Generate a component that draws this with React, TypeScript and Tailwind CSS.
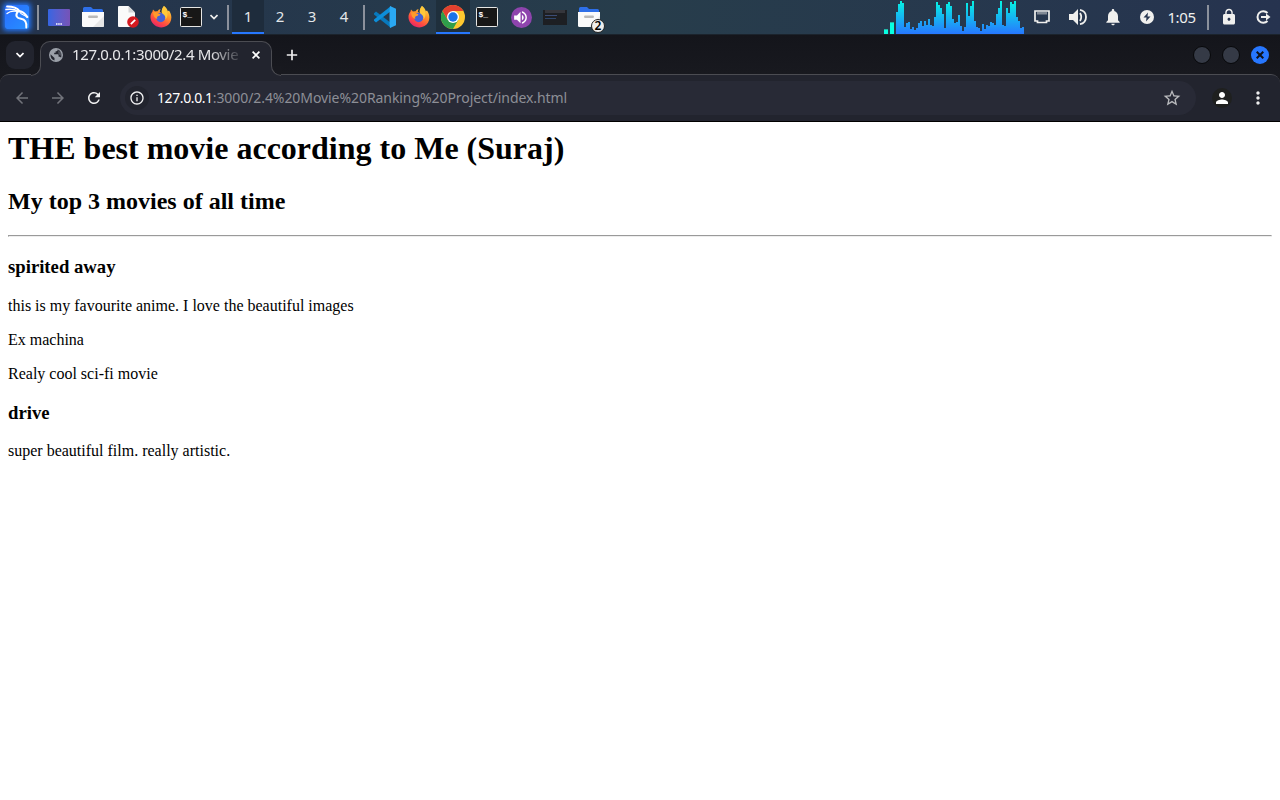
import React from "react";
import {
  MdArrowBack,
  MdArrowForward,
  MdLock,
  MdMoreVert,
  MdNotifications,
  MdPerson,
  MdRefresh,
  MdStarBorder,
  MdVolumeUp,
  MdInfoOutline,
} from "react-icons/md";

const CPU_SAMPLES = [
  22, 30, 33, 31, 7, 11, 12, 5, 7, 4, 6, 11, 13, 8, 13, 9, 15, 9, 8, 17, 32, 29, 26, 20, 6, 30, 32, 28,
  15, 11, 12, 19, 8, 3, 7, 31, 18, 28, 33, 13, 7, 6, 3, 10, 5, 9, 8, 12, 11, 9, 20, 26, 33, 9, 8, 26,
  21, 32, 30, 33, 17, 13, 6, 7,
];

function Divider() {
  return (
    <div className="flex w-2 shrink-0 justify-center">
      <span className="h-[25px] w-[2px] bg-[#8b919c]" />
    </div>
  );
}

function Slot({ children, active = false }: { children: React.ReactNode; active?: boolean }) {
  return (
    <div
      className={
        active
          ? "flex h-[34px] w-[34px] shrink-0 items-center justify-center border-b-2 border-[#2777ff] bg-[#1f2f3c] pt-[2px]"
          : "flex h-[34px] w-[34px] shrink-0 items-center justify-center"
      }
    >
      {children}
    </div>
  );
}

function Dragon() {
  return (
    <svg width="24" height="24" viewBox="0 0 24 24" fill="none" stroke="currentColor" strokeLinecap="round">
      <path d="M2 1.500C7 1.500 12 2.500 14.500 6C17 6.500 20 8.500 22.500 12" strokeWidth="1.800" />
      <path d="M1 4.600C6 3.600 10 4.500 14 6.500" strokeWidth="1.500" />
      <path d="M2 8.500C4.500 6.300 8.500 5.600 12.500 6.400" strokeWidth="1.300" />
      <path d="M13 6.500C9.500 10.500 12 13.200 16 13.800S21.800 17.500 21.300 22.500" strokeWidth="1.900" />
      <path d="M15 7.500C17 10.500 20 9.500 22 12.500" strokeWidth="1.300" />
    </svg>
  );
}

function Globe() {
  return (
    <svg width="14" height="14" viewBox="0 0 14 14" className="shrink-0">
      <circle cx="7" cy="7" r="7" fill="#9ba0a9" />
      <path d="M1.500 6.200L5.500 10V12.600C3 12 1.200 9.600 1.500 6.200z" fill="#22242e" />
      <path d="M8.700 1.600C8.700 3 8 3.300 6.600 3.300V4.800H5.200V6.300H8.800Q9.600 6.300 9.600 7.500V8.800H11Q12 9 12 10C13.300 6.500 12 2.700 8.700 1.600z" fill="#22242e" />
      <path d="M8.700 1.500L9.500 1.800V3.500H12L12.700 8L11.500 7.500L9.600 6.500z" fill="#9ba0a9" opacity=".35" />
    </svg>
  );
}

function Terminal() {
  return (
    <svg width="22" height="20" viewBox="0 0 22 20">
      <rect x=".5" y=".5" width="21" height="19" rx="1" fill="#171717" stroke="#e6e6e4" />
      <text x="2.500" y="9.500" fill="#fff" fontSize="8" fontWeight="700" fontFamily="Liberation Mono, monospace">
        $_
      </text>
    </svg>
  );
}

function Folder() {
  return (
    <svg width="22" height="20" viewBox="0 0 22 20">
      <path d="M1 6V1.500Q1 0 2.500 0H9l2 2h8.500Q21 2 21 3.500V6z" fill="#2e6fe8" />
      <path d="M0 5H22V18.500Q22 20 20.500 20H1.500Q0 20 0 18.500z" fill="#fafafa" />
      <path d="M22 9V18.500Q22 20 20.500 20H11z" fill="#e6e6e6" />
      <rect x="6" y="8.500" width="10" height="2.500" rx="1.200" fill="#b9b9b9" />
    </svg>
  );
}

function Firefox({ id }: { id: string }) {
  return (
    <svg width="22" height="22" viewBox="0 0 22 22">
      <defs>
        <linearGradient id={id} x1=".8" y1="0" x2=".25" y2="1">
          <stop offset="0" stopColor="#ffe14a" />
          <stop offset=".4" stopColor="#ff9228" />
          <stop offset=".72" stopColor="#ff4a42" />
          <stop offset="1" stopColor="#e4206e" />
        </linearGradient>
      </defs>
      <path
        d="M14 0C17 2 17.500 4 17.800 5.200L19 4.500C23 10 21.800 17 16.500 20C10.500 23.500 2.500 20 .8 13.500C0 10 .8 7.500 2.500 5.500L3 3.500L5 5.500Q6 5 7.500 5.200Q8.500 3.300 10.500 3L9.800 5.800L12 7.500C11 5 12.500 1.500 14 0z"
        fill={`url(#${id})`}
      />
      <circle cx="10.700" cy="11.500" r="4.700" fill="#4561d5" />
      <path d="M3 6.500L6 5.800Q7.500 7.800 10.500 8.200Q10 10 7.800 10.300Q6.500 11 7.300 13Q3.500 12 3 6.500z" fill="#ff9a2b" />
      <path d="M14 0C19 6 18 11 15.400 13.500Q16 9.500 12.500 7.800Q10.500 4 14 0z" fill="#ffc83a" />
    </svg>
  );
}

function Chrome() {
  return (
    <svg width="24" height="24" viewBox="0 0 24 24">
      <circle cx="12" cy="12" r="12" fill="#fdc72f" />
      <path d="M1.600 6A12 12 0 0 0 12 24L17.200 15L12 12L6.800 15z" fill="#2f9e4b" />
      <path d="M1.600 6A12 12 0 0 1 22.400 6H12L6.800 15z" fill="#e2402f" />
      <circle cx="12" cy="12" r="6" fill="#fff" />
      <circle cx="12" cy="12" r="4.700" fill="#1a73e8" />
    </svg>
  );
}

function Taskbar() {
  return (
    <header className="flex h-[34px] w-full shrink-0 items-center bg-linear-to-r from-[#24334c] via-[#273d4b] to-[#26334f] font-['Noto_Sans',sans-serif] text-[#f0f0ee]">
      <Slot>
        <div className="flex size-6 items-center justify-center overflow-hidden rounded-[2px] bg-linear-to-br from-[#2b6bff] to-[#2790ff] text-white shadow-[0_0_5px_2px_#2373f4]">
          <Dragon />
        </div>
      </Slot>
      <Divider />
      <Slot>
        <div className="flex h-[17px] w-[22px] items-end justify-center rounded-[1px] bg-linear-to-r from-[#3465e2] to-[#7653b7] pb-[1px] text-white">
          <svg width="6" height="2" viewBox="0 0 6 2">
            <path d="M0 1H6" stroke="currentColor" strokeWidth="1.500" strokeDasharray="1.500 .7" />
          </svg>
        </div>
      </Slot>
      <Slot>
        <Folder />
      </Slot>
      <Slot>
        <svg width="22" height="22" viewBox="0 0 22 22" className="ml-[3px]">
          <path d="M1 0H10.500L17 6.500V21H1Q0 21 0 20V1Q0 0 1 0z" fill="#fafafa" />
          <path d="M10.500 0L17 6.500H10.500z" fill="#d4d5d7" />
          <circle cx="15" cy="16" r="5.800" fill="#d51a20" />
          <path d="M12.800 18.200L17.200 13.800" stroke="#fff" strokeWidth="1.800" />
        </svg>
      </Slot>
      <Slot>
        <Firefox id="fox-launcher" />
      </Slot>
      <div className="flex w-[26px] justify-center">
        <Terminal />
      </div>
      <div className="flex w-5 justify-center">
        <svg width="8" height="6" viewBox="0 0 8 6" fill="none" stroke="currentColor" strokeWidth="1.700">
          <path d="M.5 1L4 4.500L7.500 1" />
        </svg>
      </div>
      <Divider />
      <nav className="flex h-full text-[15px] leading-[33px] text-[#e3e7e9]">
        <span className="w-8 border-b-2 border-[#2777ff] bg-[#1e2c3c] text-center">1</span>
        <span className="w-8 text-center">2</span>
        <span className="w-8 text-center">3</span>
        <span className="w-8 text-center">4</span>
      </nav>
      <Divider />
      <Slot>
        <svg width="22" height="22" viewBox="0 0 22 22">
          <path d="M0 7.200L2 5.500L17 17V22L0 8.500z" fill="#0879bd" />
          <path d="M0 14.800L2 16.500L17 5V0L0 13.500z" fill="#0d8ed9" />
          <path d="M16 0L22 2.800V19.200L16 22L15.500 17V5z" fill="#2aa8f2" />
        </svg>
      </Slot>
      <Slot>
        <Firefox id="fox-window" />
      </Slot>
      <Slot active>
        <Chrome />
      </Slot>
      <Slot>
        <Terminal />
      </Slot>
      <Slot>
        <div className="flex size-[21px] items-center justify-center rounded-full bg-[#8e44ad] pr-[2px] text-white">
          <MdVolumeUp size={17} />
        </div>
      </Slot>
      <Slot>
        <div className="flex h-[15px] w-6 flex-col gap-[2px] bg-[#1d1f23] px-[2px]">
          <span className="h-[3px] bg-[#35363c]" />
          <span className="h-px w-3 bg-[#3c4c75]" />
          <span className="h-px w-[11px] bg-[#2f466b]" />
        </div>
      </Slot>
      <Slot>
        <div className="relative">
          <Folder />
          <span className="absolute -right-[5px] -bottom-[6px] flex size-[14px] items-center justify-center rounded-full border border-[#222] bg-[#eeeeec] text-[12px] leading-none font-semibold text-black">
            2
          </span>
        </div>
      </Slot>

      <div className="ml-auto flex h-full items-end">
        <span className="mr-[2px] h-[5px] w-1 border-t border-[#21b7a7] bg-[#08ffe1]" />
        <span className="mr-[2px] h-3 w-1 border-t border-[#21b7a7] bg-[#08ffe1]" />
        <svg width="128" height="34" viewBox="0 0 128 34" shapeRendering="crispEdges">
          <defs>
            <linearGradient id="load" gradientUnits="userSpaceOnUse" x1="0" y1="0" x2="0" y2="34">
              <stop offset="0" stopColor="#04f7e2" />
              <stop offset="1" stopColor="#2777ff" />
            </linearGradient>
          </defs>
          {CPU_SAMPLES.map((h, i) => (
            <rect key={i} x={i * 2} y={34 - h} width="2" height={h} fill="url(#load)" />
          ))}
        </svg>
      </div>
      <div className="flex w-9 justify-center">
        <svg width="16" height="14" viewBox="0 0 16 14" fill="none" stroke="currentColor">
          <path d="M1 1H15V11H12.500V12.500H3.500V11H1z" strokeWidth="1.700" />
          <path d="M4 2V4.500M6 2V4.500M8 2V4.500M10 2V4.500M12 2V4.500" strokeWidth=".9" />
        </svg>
      </div>
      <div className="flex w-9 justify-center">
        <svg width="18" height="18" viewBox="0 0 18 18" fill="none" stroke="currentColor">
          <path d="M0 6H4L9 1V17L4 12H0z" fill="currentColor" stroke="none" />
          <path d="M11 5Q13.500 9 11 13M11 1.800C19 3 19 15 11 16.200" strokeWidth="1.800" />
        </svg>
      </div>
      <div className="flex w-[34px] justify-center">
        <MdNotifications size={20} />
      </div>
      <div className="flex w-[34px] justify-center">
        <svg width="14" height="14" viewBox="0 0 14 14">
          <circle cx="7" cy="7" r="7" fill="currentColor" />
          <path d="M8 2.500L3.500 7.500H6.500L6 11.500L10.500 6.500H7.500z" fill="#273650" />
        </svg>
      </div>
      <time className="w-10 pr-[5px] text-center text-[15px] leading-[34px] tracking-[-0.4px]">1:05</time>
      <Divider />
      <div className="flex w-[34px] justify-center">
        <MdLock size={18} />
      </div>
      <div className="flex w-[34px] justify-center">
        <svg width="15" height="14" viewBox="0 0 15 14" fill="none" stroke="currentColor" strokeWidth="2">
          <path d="M11.500 3A5.800 5.800 0 1 0 11.500 11" />
          <path d="M5 7H11" />
          <path d="M10 3.500L14.500 7L10 10.500z" fill="currentColor" stroke="none" />
        </svg>
      </div>
    </header>
  );
}

function TabStrip() {
  return (
    <div className="flex h-10 shrink-0 items-start border-t border-[#1b232c] bg-linear-to-b from-[#14151b] to-[#18191f] pt-[6px] pl-[6px]">
      <button className="flex size-7 items-center justify-center rounded-[9px] bg-[#22242e] text-white">
        <svg width="8" height="6" viewBox="0 0 8 6" fill="none" stroke="currentColor" strokeWidth="1.700">
          <path d="M.5 1L4 4.500L7.500 1" />
        </svg>
      </button>
      <div className="relative ml-[6px] flex h-[34px] w-[232px] items-center rounded-t-[10px] border border-b-0 border-[#4b4c52] bg-[#22242e] pr-[11px] pb-[7px] pl-2">
        <span className="absolute -bottom-px -left-[10px] size-[10px] overflow-hidden bg-[#22242e]">
          <span className="block size-[10px] rounded-br-[10px] border-r border-b border-[#4b4c52] bg-[#18191f]" />
        </span>
        <span className="absolute -right-[10px] -bottom-px size-[10px] overflow-hidden bg-[#22242e]">
          <span className="block size-[10px] rounded-bl-[10px] border-b border-l border-[#4b4c52] bg-[#18191f]" />
        </span>
        <span className="absolute -bottom-px left-0 h-px w-full bg-[#22242e]" />
        <Globe />
        <span className="-mt-[2px] ml-[9px] w-[172px] mask-r-from-80% mask-r-to-100% font-['Noto_Sans',sans-serif] text-[15px] leading-5 tracking-[-0.36px] whitespace-nowrap text-[#e8e8ea]">
          127.0.0.1:3000/2.4 Movie
        </span>
        <svg width="8" height="8" viewBox="0 0 8 8" className="ml-auto shrink-0 text-white" stroke="currentColor" strokeWidth="1.700">
          <path d="M.6 .6L7.400 7.400M7.400 .6L.6 7.400" />
        </svg>
      </div>
      <svg width="12" height="12" viewBox="0 0 12 12" className="mt-2 ml-[14px] text-[#eeeeee]" stroke="currentColor" strokeWidth="1.700">
        <path d="M6 .8V11.200M.8 6H11.200" />
      </svg>
      <div className="mt-[5px] mr-[11px] ml-auto flex gap-[11px]">
        <span className="size-[18px] rounded-full border border-[#07080a] bg-[#353a46]" />
        <span className="size-[18px] rounded-full border border-[#07080a] bg-[#353a46]" />
        <span className="flex size-[18px] items-center justify-center rounded-full bg-[#2777ff] text-[#101218]">
          <svg width="8" height="8" viewBox="0 0 8 8" stroke="currentColor" strokeWidth="2">
            <path d="M.7 .7L7.300 7.300M7.300 .7L.7 7.300" />
          </svg>
        </span>
      </div>
    </div>
  );
}

function Toolbar() {
  return (
    <div className="flex h-12 shrink-0 bg-[#18191f]">
      <div className="flex w-full items-center rounded-t-[9px] border-t border-b border-t-[#4b4c52] border-b-black bg-[#22242e]">
        <span className="ml-1 flex w-9 justify-center text-[#72747b]">
          <MdArrowBack size={18} />
        </span>
        <span className="flex w-9 justify-center text-[#72747b]">
          <MdArrowForward size={18} />
        </span>
        <span className="flex w-9 justify-center text-[#f1f1f2]">
          <MdRefresh size={18} />
        </span>
        <div className="ml-2 flex h-[34px] w-[1076px] items-center rounded-full bg-[#282a36] pr-[14px] pl-[5px]">
          <span className="flex size-6 items-center justify-center rounded-full bg-[#22242e] text-[#f1f1f2]">
            <MdInfoOutline size={16} />
          </span>
          <span className="ml-2 font-['Noto_Sans',sans-serif] text-[14px] leading-5 text-[#8d8f96]">
            <span className="tracking-[-0.4px] text-white">127.0.0.1</span>
            <span className="tracking-[-0.07px]">:3000/2.4%20Movie%20Ranking%20Project/index.html</span>
          </span>
          <MdStarBorder size={20} className="ml-auto text-[#b9babd]" />
        </div>
        <span className="ml-4 flex size-5 items-center justify-center rounded-full bg-[#1f201f] text-white">
          <MdPerson size={18} />
        </span>
        <span className="ml-4 text-[#eeeeee]">
          <MdMoreVert size={20} />
        </span>
      </div>
    </div>
  );
}

export default function App() {
  return (
    <div className="flex h-screen w-full flex-col overflow-hidden bg-white">
      <Taskbar />
      <TabStrip />
      <Toolbar />
      <main className="flex-1 px-2 pt-2 font-['Liberation_Serif',serif] text-base leading-[18px] text-black">
        <h1 className="text-[32px] leading-[37px] font-bold">THE best movie according to Me (Suraj)</h1>
        <h2 className="mt-[21px] text-2xl leading-[27px] font-bold">My top 3 movies of all time</h2>
        <hr className="mt-5 h-[2px] border border-t-[#9a9a9a] border-r-[#eee] border-b-[#eee] border-l-[#9a9a9a]" />
        <h3 className="mt-[19px] text-[18.72px] leading-[21px] font-bold">spirited away</h3>
        <p className="mt-5">this is my favourite anime. I love the beautiful images</p>
        <p className="mt-4">Ex machina</p>
        <p className="mt-4">Realy cool sci-fi movie</p>
        <h3 className="mt-[19px] text-[18.72px] leading-[21px] font-bold">drive</h3>
        <p className="mt-[19px]">super beautiful film. really artistic.</p>
      </main>
    </div>
  );
}
